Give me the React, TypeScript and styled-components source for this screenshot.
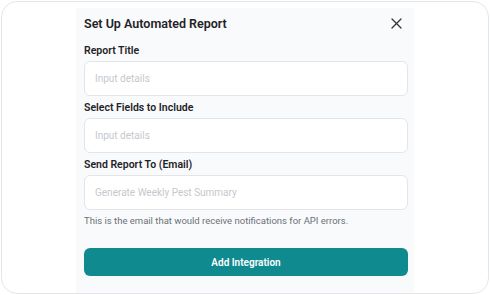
import React from "react";
import styled, { createGlobalStyle } from "styled-components";

const Global = createGlobalStyle`
  html, body { margin: 0; padding: 0; background: #ffffff; }
  body { font-family: Roboto, "Noto Sans", sans-serif; }
  * { box-sizing: border-box; }
`;

const Frame = styled.div`
  margin: 1px;
  width: 488px;
  height: 293px;
  border: 1.5px solid #e4e6e9;
  border-radius: 16px;
  display: flex;
  justify-content: center;
  overflow: hidden;
`;

const Modal = styled.div`
  width: 338px;
  margin-top: 6px;
  background: #f9fafb;
  padding: 0 6px 0 8px;
  display: flex;
  flex-direction: column;
`;

const Header = styled.div`
  height: 31px;
  display: flex;
  align-items: center;
  justify-content: space-between;
`;

const Title = styled.h2`
  margin: 0;
  font-size: 12.5px;
  font-weight: 600;
  color: #1f2328;
`;

const Close = styled.button`
  border: none;
  background: none;
  padding: 0;
  width: 20px;
  height: 20px;
  display: flex;
  align-items: center;
  justify-content: center;
  margin-right: 2px;
  color: #30343a;
  cursor: pointer;
`;

const Field = styled.div`
  display: flex;
  flex-direction: column;
  margin-top: 5px;
`;

const Label = styled.label`
  font-size: 10.5px;
  line-height: 13px;
  font-weight: 600;
  color: #1f2328;
  margin-bottom: 3.5px;
`;

const Input = styled.input`
  height: 35.5px;
  width: 100%;
  border: 1px solid #e3e5e8;
  border-radius: 6px;
  background: #ffffff;
  padding: 0 10px;
  font-family: Roboto, "Noto Sans", sans-serif;
  font-size: 10px;
  color: #1f2328;
  outline: none;
  &::placeholder { color: #c5c8cd; }
`;

const Help = styled.p`
  margin: 5px 0 0;
  font-size: 9.5px;
  line-height: 12px;
  color: #6b7178;
`;

const Button = styled.button`
  margin-top: 21px;
  height: 28px;
  border: none;
  border-radius: 6px;
  background: #0f8a8f;
  color: #ffffff;
  font-family: Roboto, "Noto Sans", sans-serif;
  font-size: 10px;
  font-weight: 600;
  cursor: pointer;
`;

export default function App() {
  return (
    <>
      <Global />
      <Frame>
        <Modal>
          <Header>
            <Title>Set Up Automated Report</Title>
            <Close aria-label="Close">
              <svg width="11" height="11" viewBox="0 0 11 11" fill="none" stroke="currentColor" strokeWidth="1.3" strokeLinecap="round">
                <path d="M1 1L10 10M10 1L1 10" />
              </svg>
            </Close>
          </Header>
          <Field>
            <Label>Report Title</Label>
            <Input placeholder="Input details" />
          </Field>
          <Field>
            <Label>Select Fields to Include</Label>
            <Input placeholder="Input details" />
          </Field>
          <Field>
            <Label>Send Report To (Email)</Label>
            <Input placeholder="Generate Weekly Pest Summary" />
          </Field>
          <Help>This is the email that would receive notifications for API errors.</Help>
          <Button>Add Integration</Button>
        </Modal>
      </Frame>
    </>
  );
}
